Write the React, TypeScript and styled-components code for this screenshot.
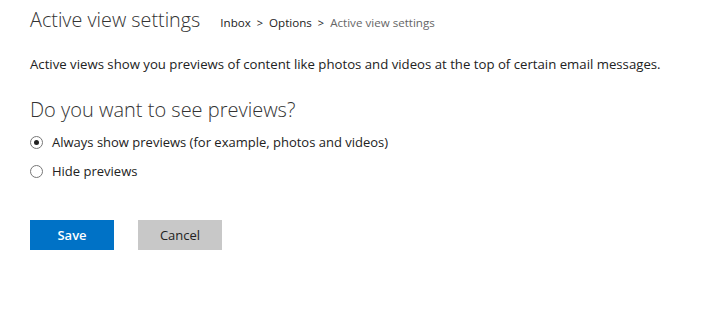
import React, { useState } from 'react';
import styled, { createGlobalStyle } from 'styled-components';

const GlobalStyle = createGlobalStyle`
  html, body {
    margin: 0;
    padding: 0;
    background: #ffffff;
  }
  body {
    font-family: 'Open Sans', 'Noto Sans', sans-serif;
    color: #333333;
  }
`;

const Page = styled.div`
  padding: 6px 30px 0 30px;
  width: 714px;
  height: 309px;
  box-sizing: border-box;
`;

const Header = styled.div`
  display: flex;
  align-items: baseline;
  gap: 20px;
  height: 30px;
`;

const Title = styled.h1`
  margin: 0;
  font-size: 19.8px;
  font-weight: 300;
  color: #333333;
`;

const Crumbs = styled.div`
  display: flex;
  align-items: baseline;
  gap: 6px;
  font-size: 11.6px;
`;

const Crumb = styled.span<{ current?: boolean }>`
  color: ${p => (p.current ? '#666666' : '#222222')};
`;

const Sep = styled.span`
  color: #222222;
  font-size: 11px;
`;

const Intro = styled.p`
  margin: 19px 0 0 0;
  font-size: 13.2px;
  color: #222222;
`;

const Question = styled.h2`
  margin: 23px 0 0 0;
  font-size: 20px;
  font-weight: 300;
  color: #333333;
`;

const Options = styled.div`
  display: flex;
  flex-direction: column;
  gap: 11px;
  margin-top: 10px;
`;

const OptionRow = styled.label`
  display: flex;
  align-items: center;
  gap: 9px;
  font-size: 13px;
  color: #222222;
  cursor: pointer;
`;

const Radio = styled.span<{ checked: boolean }>`
  width: 11px;
  height: 11px;
  border: 1px solid #777777;
  border-radius: 50%;
  display: flex;
  align-items: center;
  justify-content: center;
  box-sizing: content-box;

  &::after {
    content: '';
    width: 5px;
    height: 5px;
    border-radius: 50%;
    background: ${p => (p.checked ? '#222222' : 'transparent')};
  }
`;

const Actions = styled.div`
  display: flex;
  gap: 24px;
  margin-top: 40px;
`;

const Button = styled.button<{ primary?: boolean }>`
  width: 84px;
  height: 30px;
  border: none;
  font-family: inherit;
  font-size: 13px;
  font-weight: ${p => (p.primary ? 600 : 400)};
  background: ${p => (p.primary ? '#0072c6' : '#c8c8c8')};
  color: ${p => (p.primary ? '#ffffff' : '#222222')};
  cursor: pointer;
`;

const App: React.FC = () => {
  const [showPreviews, setShowPreviews] = useState(true);

  return (
    <Page>
      <GlobalStyle />
      <Header>
        <Title>Active view settings</Title>
        <Crumbs>
          <Crumb>Inbox</Crumb>
          <Sep>&gt;</Sep>
          <Crumb>Options</Crumb>
          <Sep>&gt;</Sep>
          <Crumb current>Active view settings</Crumb>
        </Crumbs>
      </Header>
      <Intro>
        Active views show you previews of content like photos and videos at the top of certain email messages.
      </Intro>
      <Question>Do you want to see previews?</Question>
      <Options>
        <OptionRow onClick={() => setShowPreviews(true)}>
          <Radio checked={showPreviews} />
          Always show previews (for example, photos and videos)
        </OptionRow>
        <OptionRow onClick={() => setShowPreviews(false)}>
          <Radio checked={!showPreviews} />
          Hide previews
        </OptionRow>
      </Options>
      <Actions>
        <Button primary>Save</Button>
        <Button>Cancel</Button>
      </Actions>
    </Page>
  );
};

export default App;
